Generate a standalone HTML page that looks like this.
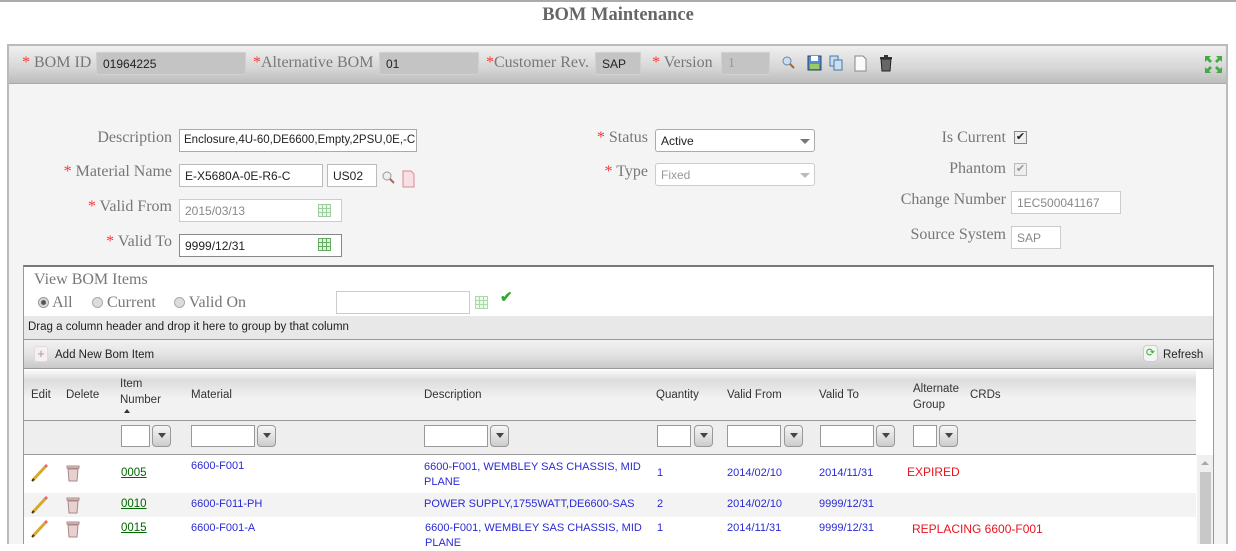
<!DOCTYPE html>
<html><head><meta charset="utf-8"><style>
*{margin:0;padding:0;box-sizing:border-box}
body{width:1236px;height:544px;overflow:hidden;background:#fff;font-family:"Liberation Sans",sans-serif;position:relative}
.a{position:absolute}
.serif{font-family:"Liberation Serif",serif;color:#777;font-size:16px;white-space:nowrap}
.r{color:#f33}
.inp{position:absolute;background:#fff;border:1px solid #bbb;font-size:12px;color:#222;padding:4px 5px;height:23px;white-space:nowrap;overflow:hidden}
.hin{position:absolute;background:#c4c4c4;border:1px solid #d0d0d0;font-size:12px;color:#222;padding:4px 6px;height:23px}
.sm{font-size:12px;white-space:nowrap}
.fi{position:absolute;top:425px;height:22px;background:#fff;border:1px solid #999}
.fb{position:absolute;top:425px;width:19px;height:22px;border:1px solid #999;border-radius:4px;background:linear-gradient(#f6f6f6,#ccc)}
.fb:after{content:"";position:absolute;left:5px;top:7px;border-left:4px solid transparent;border-right:4px solid transparent;border-top:5px solid #444}
.hd{color:#333;font-size:11.5px;position:absolute;white-space:nowrap}
.bl{color:#2a2ad6;font-size:11px;position:absolute;white-space:nowrap}
.gn{color:#060;text-decoration:underline;font-size:11.5px;position:absolute}
.red{color:#e8141e;font-size:12px;position:absolute;white-space:nowrap}
.cal{position:absolute;width:13px;height:13px;border:1px solid #6a6;background:repeating-linear-gradient(90deg,transparent 0 3px,#6a6 3px 4px),repeating-linear-gradient(0deg,#cfc 0 3px,#6a6 3px 4px)}
</style></head><body>
<div class="a" style="left:0;top:0;width:1236px;height:2px;background:#aaa"></div>
<div class="a" style="left:0;top:5px;width:1236px;text-align:center;font:bold 18.5px 'Liberation Serif',serif;color:#666">BOM Maintenance</div>

<div class="a" style="left:7px;top:44px;width:1221px;height:500px;border:2px solid #bbb;border-bottom:none;background:#f4f4f4"></div>
<div class="a" style="left:9px;top:46px;width:1217px;height:38px;background:linear-gradient(#f0f0f0,#d6d6d6 60%,#bcbcbc);border-bottom:1px solid #aaa"></div>
<div class="a serif" style="left:22px;top:54px"><span class="r">*</span> BOM ID</div>
<div class="hin" style="left:96px;top:52px;width:150px">01964225</div>
<div class="a serif" style="left:253px;top:54px"><span class="r">*</span>Alternative BOM</div>
<div class="hin" style="left:379px;top:52px;width:100px">01</div>
<div class="a serif" style="left:486px;top:54px"><span class="r">*</span>Customer Rev.</div>
<div class="hin" style="left:595px;top:52px;width:46px">SAP</div>
<div class="a serif" style="left:652px;top:54px"><span class="r">*</span> Version</div>
<div class="hin" style="left:721px;top:52px;width:49px;color:#999;font-family:'Liberation Serif',serif;font-size:14px;padding-top:3px">1</div>
<svg class="a" style="left:781px;top:54px" width="120" height="18">
<circle cx="6" cy="7" r="4" fill="#cde" stroke="#68a"/><line x1="9" y1="10" x2="13" y2="14" stroke="#a63" stroke-width="2"/>
<rect x="27" y="2" width="13" height="14" fill="#5a8ad0" stroke="#246"/><rect x="30" y="2" width="7" height="5" fill="#fff"/><rect x="29" y="10" width="9" height="5" fill="#9c6"/>
<rect x="49" y="2" width="8" height="10" fill="#cde" stroke="#47a"/><rect x="53" y="6" width="8" height="10" fill="#cde" stroke="#47a"/>
<path d="M74 2h8l3 3v12h-11z" fill="#fafafa" stroke="#888"/>
<rect x="99" y="3" width="12" height="2" fill="#333"/><rect x="103" y="1" width="4" height="2" fill="#333"/><path d="M100 5h10l-1 12h-8z" fill="#666" stroke="#222"/>
</svg>
<svg class="a" style="left:1205px;top:56px" width="17" height="17"><g fill="#4a4"><path d="M0 0h6l-2 2 3 3-2 2-3-3-2 2z"/><path d="M17 0v6l-2-2-3 3-2-2 3-3-2-2z"/><path d="M0 17v-6l2 2 3-3 2 2-3 3 2 2z"/><path d="M17 17h-6l2-2-3-3 2-2 3 3 2-2z"/></g></svg>

<div class="a serif" style="left:0;width:172px;text-align:right;top:129px">Description</div>
<div class="inp" style="left:179px;top:129px;width:238px;border-color:#aaa;font-size:11.5px;padding-left:4px">Enclosure,4U-60,DE6600,Empty,2PSU,0E,-C</div>
<div class="a serif" style="left:0;width:172px;text-align:right;top:163px"><span class="r">*</span> Material Name</div>
<div class="inp" style="left:179px;top:164px;width:144px">E-X5680A-0E-R6-C</div>
<div class="inp" style="left:327px;top:164px;width:50px">US02</div>
<svg class="a" style="left:381px;top:170px" width="36" height="18"><circle cx="6" cy="6" r="4" fill="#eee" stroke="#999"/><line x1="9" y1="9" x2="13" y2="13" stroke="#a66" stroke-width="2"/><path d="M22 1h8l3 3v13h-11z" fill="#f6e0e4" stroke="#d89"/></svg>
<div class="a serif" style="left:0;width:172px;text-align:right;top:198px"><span class="r">*</span> Valid From</div>
<div class="inp" style="left:179px;top:199px;width:163px;border-color:#ccc;color:#888">2015/03/13</div>
<div class="cal" style="left:318px;top:204px;opacity:.6"></div>
<div class="a serif" style="left:0;width:172px;text-align:right;top:233px"><span class="r">*</span> Valid To</div>
<div class="inp" style="left:179px;top:234px;width:163px;border-color:#888">9999/12/31</div>
<div class="cal" style="left:318px;top:238px"></div>

<div class="a serif" style="left:560px;width:88px;text-align:right;top:129px"><span class="r">*</span> Status</div>
<div class="inp" style="left:655px;top:129px;width:160px;border-radius:3px;border-color:#aaa">Active</div>
<div class="a" style="left:800px;top:139px;border-left:5px solid transparent;border-right:5px solid transparent;border-top:5px solid #777"></div>
<div class="a serif" style="left:560px;width:88px;text-align:right;top:163px"><span class="r">*</span> Type</div>
<div class="inp" style="left:655px;top:163px;width:160px;border-radius:3px;border-color:#ccc;color:#999">Fixed</div>
<div class="a" style="left:800px;top:173px;border-left:5px solid transparent;border-right:5px solid transparent;border-top:5px solid #bbb"></div>

<div class="a serif" style="left:880px;width:126px;text-align:right;top:129px">Is Current</div>
<div class="a" style="left:1014px;top:131px;width:13px;height:13px;border:1px solid #888;background:#eee;font-size:11px;line-height:11px;text-align:center;color:#222">✔</div>
<div class="a serif" style="left:880px;width:126px;text-align:right;top:160px">Phantom</div>
<div class="a" style="left:1014px;top:163px;width:13px;height:13px;border:1px solid #bbb;background:#eee;font-size:11px;line-height:11px;text-align:center;color:#999">✔</div>
<div class="a serif" style="left:880px;width:126px;text-align:right;top:191px">Change Number</div>
<div class="inp" style="left:1011px;top:191px;width:110px;border-color:#ccc;color:#888">1EC500041167</div>
<div class="a serif" style="left:880px;width:126px;text-align:right;top:226px">Source System</div>
<div class="inp" style="left:1011px;top:226px;width:50px;border-color:#ccc;color:#888">SAP</div>

<!-- grid -->
<div class="a" style="left:23px;top:265px;width:1191px;height:279px;background:#fff;border-top:2px solid #777;border-left:1px solid #999;border-right:1px solid #999"></div>
<div class="a serif" style="left:34px;top:271px">View BOM Items</div>
<div class="a serif" style="left:38px;top:294px"><span style="display:inline-block;width:11px;height:11px;border-radius:50%;border:1px solid #999;background:radial-gradient(#555 0 2px,#ddd 3px);vertical-align:-1px"></span> All</div>
<div class="a serif" style="left:92px;top:294px"><span style="display:inline-block;width:11px;height:11px;border-radius:50%;border:1px solid #aaa;background:#ddd;vertical-align:-1px"></span> Current</div>
<div class="a serif" style="left:174px;top:294px"><span style="display:inline-block;width:11px;height:11px;border-radius:50%;border:1px solid #aaa;background:#ddd;vertical-align:-1px"></span> Valid On</div>
<div class="inp" style="left:336px;top:291px;width:134px;height:23px;border-color:#ccc"></div>
<div class="cal" style="left:475px;top:296px;opacity:.5"></div>
<div class="a" style="left:500px;top:288px;color:#3a3;font-size:15px;font-weight:bold">✔</div>

<div class="a" style="left:24px;top:316px;width:1189px;height:24px;background:#e8e8e8;border-bottom:1px solid #999"></div>
<div class="a" style="left:28px;top:321px;color:#222;font-size:11.5px;white-space:nowrap">Drag a column header and drop it here to group by that column</div>
<div class="a" style="left:24px;top:340px;width:1189px;height:29px;background:linear-gradient(#f2f2f2,#e4e4e4 50%,#c8c8c8);border-bottom:1px solid #999"></div>
<div class="a" style="left:34px;top:346px;width:14px;height:16px;border:1px solid #ddd;border-radius:3px;background:#f8f0f0;font-size:13px;line-height:13px;text-align:center;color:#999">+</div>
<div class="a" style="left:55px;top:349px;color:#222;font-size:11.5px">Add New Bom Item</div>
<div class="a" style="left:1143px;top:345px;width:15px;height:17px;border:1px solid #ccc;border-radius:4px;background:#f4f4f4;color:#3a3;font-size:11px;text-align:center;line-height:15px">⟳</div>
<div class="a" style="left:1163px;top:349px;color:#222;font-size:11.5px">Refresh</div>

<div class="a" style="left:24px;top:370px;width:1172px;height:51px;background:linear-gradient(#fafafa,#dcdcdc 10px,#f2f2f2 28px);border-bottom:1px solid #999"></div>
<div class="hd" style="left:31px;top:389px">Edit</div>
<div class="hd" style="left:66px;top:389px">Delete</div>
<div class="hd" style="left:120px;top:376px;line-height:16px">Item<br>Number</div>
<div class="a" style="left:124px;top:409px;border-left:3px solid transparent;border-right:3px solid transparent;border-bottom:4px solid #333"></div>
<div class="hd" style="left:191px;top:389px">Material</div>
<div class="hd" style="left:424px;top:389px">Description</div>
<div class="hd" style="left:656px;top:389px">Quantity</div>
<div class="hd" style="left:727px;top:389px">Valid From</div>
<div class="hd" style="left:819px;top:389px">Valid To</div>
<div class="hd" style="left:913px;top:381px;line-height:16px">Alternate<br>Group</div>
<div class="hd" style="left:970px;top:389px">CRDs</div>

<div class="a" style="left:24px;top:421px;width:1172px;height:34px;background:#eee;border-bottom:1px solid #999"></div>
<div class="fi" style="left:121px;width:29px"></div><div class="fb" style="left:152px"></div>
<div class="fi" style="left:191px;width:64px"></div><div class="fb" style="left:257px"></div>
<div class="fi" style="left:424px;width:64px"></div><div class="fb" style="left:490px"></div>
<div class="fi" style="left:657px;width:34px"></div><div class="fb" style="left:694px"></div>
<div class="fi" style="left:727px;width:54px"></div><div class="fb" style="left:784px"></div>
<div class="fi" style="left:820px;width:54px"></div><div class="fb" style="left:876px"></div>
<div class="fi" style="left:913px;width:24px"></div><div class="fb" style="left:939px"></div>

<div class="a" style="left:24px;top:493px;width:1172px;height:24px;background:#f3f3f3"></div>
<div class="a" style="left:1197px;top:455px;width:16px;height:89px;background:#f0f0f0"></div>
<div class="a" style="left:1200px;top:472px;width:11px;height:72px;background:#c8c8c8"></div>
<div class="a" style="left:1201px;top:461px;border-left:4px solid transparent;border-right:4px solid transparent;border-bottom:4px solid #aaa"></div>

<svg class="a" style="left:30px;top:463px" width="50" height="80">
<g><line x1="3" y1="17" x2="15" y2="4" stroke="#d9a82a" stroke-width="3"/><line x1="15" y1="4" x2="17" y2="2" stroke="#e66" stroke-width="3"/><line x1="2" y1="18" x2="4" y2="16" stroke="#333" stroke-width="2"/></g>
<g transform="translate(0,32)"><line x1="3" y1="17" x2="15" y2="4" stroke="#d9a82a" stroke-width="3"/><line x1="15" y1="4" x2="17" y2="2" stroke="#e66" stroke-width="3"/><line x1="2" y1="18" x2="4" y2="16" stroke="#333" stroke-width="2"/></g>
<g transform="translate(0,56)"><line x1="3" y1="17" x2="15" y2="4" stroke="#d9a82a" stroke-width="3"/><line x1="15" y1="4" x2="17" y2="2" stroke="#e66" stroke-width="3"/><line x1="2" y1="18" x2="4" y2="16" stroke="#333" stroke-width="2"/></g>
<g fill="#e8d0d0" stroke="#a88"><rect x="37" y="3" width="12" height="2"/><path d="M38 6h10l-1 12h-8z"/><rect x="37" y="35" width="12" height="2"/><path d="M38 38h10l-1 12h-8z"/><rect x="37" y="59" width="12" height="2"/><path d="M38 62h10l-1 12h-8z"/></g>
</svg>
<div class="gn" style="left:121px;top:467px">0005</div>
<div class="bl" style="left:191px;top:460px">6600-F001</div>
<div class="bl" style="left:424px;top:460px;line-height:15px">6600-F001, WEMBLEY SAS CHASSIS, MID<br>PLANE</div>
<div class="bl" style="left:657px;top:467px">1</div>
<div class="bl" style="left:727px;top:467px">2014/02/10</div>
<div class="bl" style="left:819px;top:467px">2014/11/31</div>
<div class="red" style="left:907px;top:465px">EXPIRED</div>

<div class="gn" style="left:121px;top:498px">0010</div>
<div class="bl" style="left:191px;top:498px">6600-F011-PH</div>
<div class="bl" style="left:424px;top:498px">POWER SUPPLY,1755WATT,DE6600-SAS</div>
<div class="bl" style="left:657px;top:498px">2</div>
<div class="bl" style="left:727px;top:498px">2014/02/10</div>
<div class="bl" style="left:819px;top:498px">9999/12/31</div>

<div class="gn" style="left:121px;top:522px">0015</div>
<div class="bl" style="left:191px;top:522px">6600-F001-A</div>
<div class="bl" style="left:425px;top:521px;line-height:15px">6600-F001, WEMBLEY SAS CHASSIS, MID<br>PLANE</div>
<div class="bl" style="left:657px;top:522px">1</div>
<div class="bl" style="left:727px;top:522px">2014/11/31</div>
<div class="bl" style="left:819px;top:522px">9999/12/31</div>
<div class="red" style="left:912px;top:522px">REPLACING 6600-F001</div>
</body></html>
